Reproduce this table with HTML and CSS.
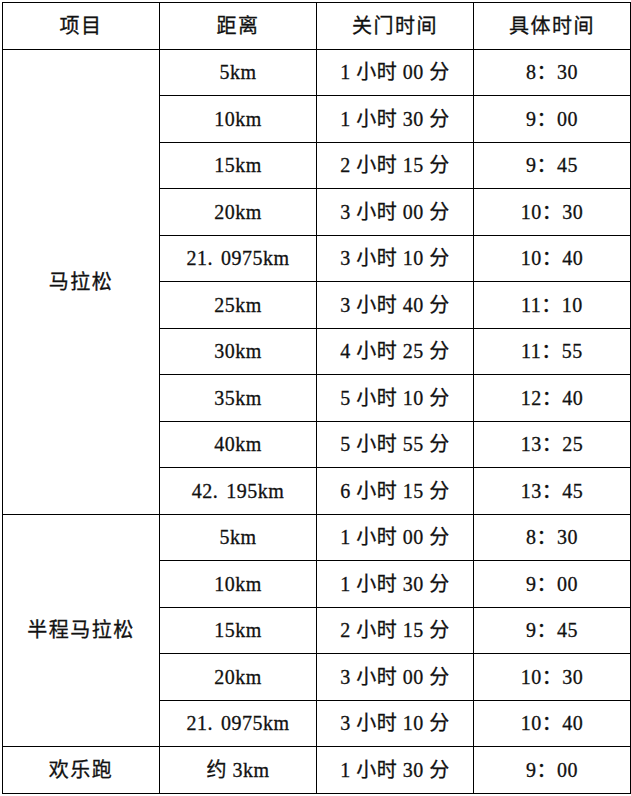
FILE: index.html
```html
<!DOCTYPE html>
<html lang="zh-CN">
<head>
<meta charset="utf-8">
<title>关门时间</title>
<link rel="stylesheet" href="styles.css">
</head>
<body>
<table class="schedule">
  <colgroup>
    <col class="c1"><col class="c2"><col class="c3"><col class="c4">
  </colgroup>
  <thead>
    <tr><th>项目</th><th>距离</th><th>关门时间</th><th>具体时间</th></tr>
  </thead>
  <tbody>
    <tr><td rowspan="10" class="event">马拉松</td><td>5km</td><td>1 小时 00 分</td><td>8：30</td></tr>
    <tr><td>10km</td><td>1 小时 30 分</td><td>9：00</td></tr>
    <tr><td>15km</td><td>2 小时 15 分</td><td>9：45</td></tr>
    <tr><td>20km</td><td>3 小时 00 分</td><td>10：30</td></tr>
    <tr><td>21<span class="dot">.</span>0975km</td><td>3 小时 10 分</td><td>10：40</td></tr>
    <tr><td>25km</td><td>3 小时 40 分</td><td>11：10</td></tr>
    <tr><td>30km</td><td>4 小时 25 分</td><td>11：55</td></tr>
    <tr><td>35km</td><td>5 小时 10 分</td><td>12：40</td></tr>
    <tr><td>40km</td><td>5 小时 55 分</td><td>13：25</td></tr>
    <tr><td>42<span class="dot">.</span>195km</td><td>6 小时 15 分</td><td>13：45</td></tr>
    <tr><td rowspan="5" class="event">半程马拉松</td><td>5km</td><td>1 小时 00 分</td><td>8：30</td></tr>
    <tr><td>10km</td><td>1 小时 30 分</td><td>9：00</td></tr>
    <tr><td>15km</td><td>2 小时 15 分</td><td>9：45</td></tr>
    <tr><td>20km</td><td>3 小时 00 分</td><td>10：30</td></tr>
    <tr><td>21<span class="dot">.</span>0975km</td><td>3 小时 10 分</td><td>10：40</td></tr>
    <tr><td class="event">欢乐跑</td><td>约 3km</td><td>1 小时 30 分</td><td>9：00</td></tr>
  </tbody>
</table>
</body>
</html>
```
FILE: styles.css
```css
html, body {
  margin: 0;
  padding: 0;
  background: #fff;
}
body {
  padding: 2px 0 0 2px;
  font-family: "Liberation Serif", "Noto Sans CJK SC", serif;
  color: #111;
}
.schedule {
  border-collapse: collapse;
  table-layout: fixed;
  width: 628px;
}
.c1, .c2, .c3 { width: 157px; }
.c4 { width: 157px; }
.schedule th,
.schedule td {
  border: 1px solid #000;
  height: 45.5px;
  padding: 0;
  text-align: center;
  vertical-align: middle;
  font-size: 20px;
  font-weight: normal;
  line-height: 1;
  letter-spacing: 0.5px;
  -webkit-text-stroke: 0.3px #111;
}
.schedule th,
.schedule td.event {
  letter-spacing: 1.5px;
}
.dot {
  margin-right: 8px;
}
```
